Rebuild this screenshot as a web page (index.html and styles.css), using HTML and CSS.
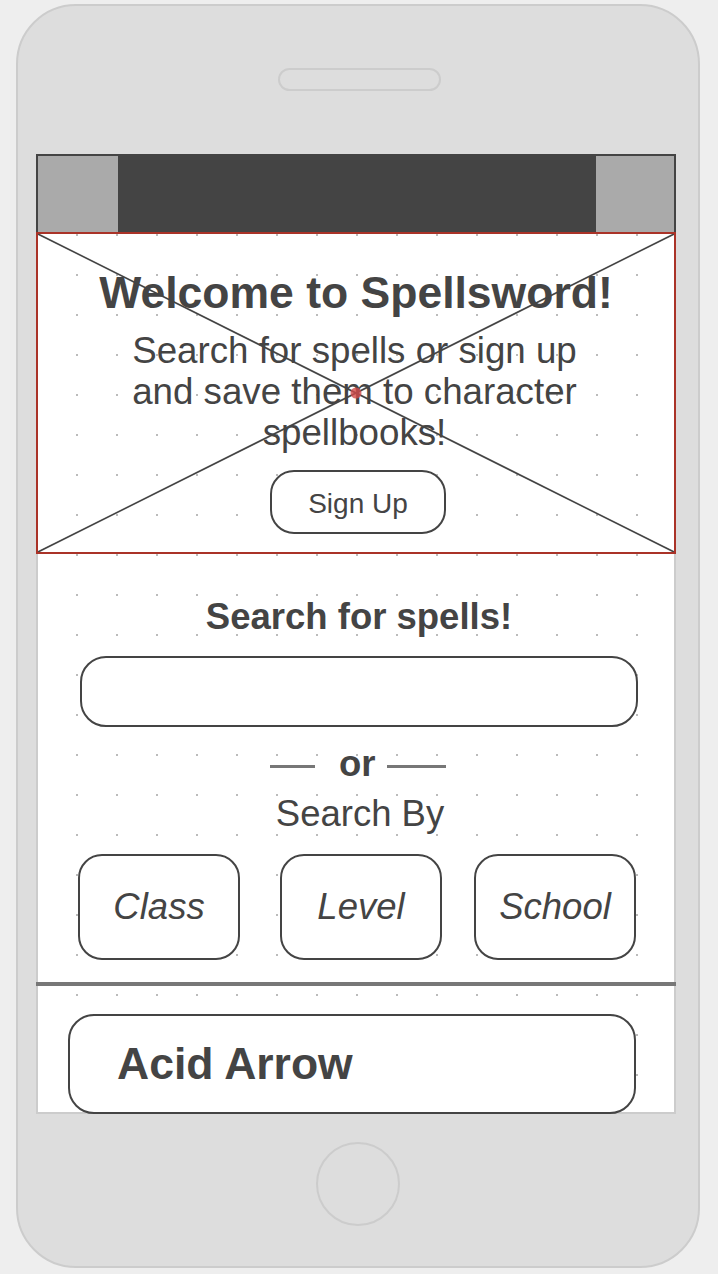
FILE: index.html
```html
<!DOCTYPE html>
<html lang="en">
<head>
<meta charset="utf-8">
<title>Spellsword</title>
<link rel="stylesheet" href="styles.css">
</head>
<body>
<div class="phone">
  <div class="speaker"></div>
  <div class="screen">
    <div class="topbar">
      <div class="tb-block tb-left"></div>
      <div class="tb-block tb-right"></div>
    </div>
    <section class="hero">
      <h1 class="hero-title">Welcome to Spellsword!</h1>
      <p class="hero-sub">Search for spells or sign up<br>and save them to character<br>spellbooks!</p>
      <button class="btn-signup" type="button">Sign Up</button>
      <svg class="hero-x" aria-hidden="true">
        <line x1="0" y1="0" x2="100%" y2="100%"></line>
        <line x1="0" y1="100%" x2="100%" y2="0"></line>
        <circle cx="50%" cy="50%" r="5.5"></circle>
      </svg>
    </section>
    <section class="search">
      <h2 class="search-title">Search for spells!</h2>
      <div class="search-input"></div>
      <div class="or-row">
        <span class="or-line or-left"></span>
        <span class="or-text">or</span>
        <span class="or-line or-right"></span>
      </div>
      <div class="search-by">Search By</div>
      <div class="filters">
        <div class="filter f-class">Class</div>
        <div class="filter f-level">Level</div>
        <div class="filter f-school">School</div>
      </div>
    </section>
    <div class="divider"></div>
    <div class="spell-card">Acid Arrow</div>
  </div>
  <div class="home"></div>
</div>
</body>
</html>
```
FILE: styles.css
```css
* {
  box-sizing: border-box;
}

html, body {
  margin: 0;
  padding: 0;
}

body {
  background: #eeeeee;
  font-family: "Liberation Sans", Arial, sans-serif;
  color: #444444;
}

.phone {
  width: 684px;
  height: 1264px;
  margin: 4px 0 0 16px;
  padding-top: 62px;
  border: 2px solid #cccccc;
  border-radius: 60px;
  background: #dddddd;
}

.speaker {
  width: 163px;
  height: 23px;
  margin-left: 260px;
  border: 2px solid #cccccc;
  border-radius: 12px;
}

.screen {
  width: 640px;
  margin: 63px 0 0 18px;
  border: 2px solid #cccccc;
  border-top: 0;
  background-color: #ffffff;
  background-image:
    linear-gradient(to bottom, transparent 2px, #ffffff 2px),
    linear-gradient(to right, #bbbbbb 2px, #ffffff 2px);
  background-size: 40px 40px;
  background-origin: border-box;
  background-position: 0 0;
}

.topbar {
  display: flex;
  justify-content: space-between;
  height: 78px;
  margin: 0 -2px;
  border: 2px solid #444444;
  border-bottom: 0;
  background: #444444;
}

.tb-block {
  background: #aaaaaa;
}

.tb-left {
  width: 80px;
}

.tb-right {
  width: 78px;
}

.hero {
  position: relative;
  height: 322px;
  margin: 0 -2px;
  padding-top: 33px;
  border: 2px solid #aa3328;
  text-align: center;
}

.hero-title {
  margin: 0;
  font-size: 44.5px;
  line-height: 52px;
  font-weight: 700;
}

.hero-sub {
  margin: 11px 0 0;
  padding-right: 3px;
  font-size: 36.7px;
  line-height: 41px;
}

.btn-signup {
  display: flex;
  align-items: center;
  justify-content: center;
  width: 176px;
  height: 64px;
  margin: 17px 0 0 232px;
  padding: 4px 0 0;
  border: 2px solid #444444;
  border-radius: 24px;
  background: #ffffff;
  color: #444444;
  font-family: "Liberation Sans", Arial, sans-serif;
  font-size: 28px;
}

.hero-x {
  position: absolute;
  left: 0;
  top: 0;
  width: 100%;
  height: 100%;
  pointer-events: none;
}

.hero-x line {
  stroke: #444444;
  stroke-width: 1.6;
}

.hero-x circle {
  fill: #d14b4b;
  opacity: 0.8;
}

.search {
  padding-top: 42px;
  text-align: center;
}

.search-title {
  margin: 0;
  padding-left: 6px;
  font-size: 36.5px;
  line-height: 42px;
  font-weight: 700;
}

.search-input {
  width: 558px;
  height: 71px;
  margin: 18px 0 0 42px;
  border: 2px solid #444444;
  border-radius: 26px;
  background: #ffffff;
}

.or-row {
  display: flex;
  align-items: center;
  height: 42px;
  margin-top: 16px;
  padding-left: 232px;
}

.or-line {
  height: 3px;
  margin-top: 4px;
  background: #777777;
}

.or-left {
  width: 45px;
  margin-right: 24px;
}

.or-right {
  width: 59px;
  margin-left: 11px;
}

.or-text {
  font-size: 36.5px;
  line-height: 42px;
  font-weight: 700;
}

.search-by {
  margin-top: 8px;
  padding-left: 8px;
  font-size: 36.5px;
  line-height: 42px;
}

.filters {
  display: flex;
  margin-top: 19px;
  padding-left: 40px;
}

.filter {
  display: flex;
  align-items: center;
  justify-content: center;
  width: 162px;
  height: 106px;
  border: 2px solid #444444;
  border-radius: 24px;
  background: #ffffff;
  font-size: 36.5px;
  font-style: italic;
}

.f-level {
  margin-left: 40px;
}

.f-school {
  margin-left: 32px;
}

.divider {
  height: 4px;
  margin: 22px -2px 0;
  background: #777777;
}

.spell-card {
  display: flex;
  align-items: center;
  width: 568px;
  height: 100px;
  margin: 28px 0 -2px 30px;
  padding-left: 47px;
  border: 2px solid #444444;
  border-radius: 26px;
  background: #ffffff;
  font-size: 44.5px;
  font-weight: 700;
}

.home {
  width: 84px;
  height: 84px;
  margin: 28px auto 0;
  border: 2px solid #cccccc;
  border-radius: 50%;
}
```
